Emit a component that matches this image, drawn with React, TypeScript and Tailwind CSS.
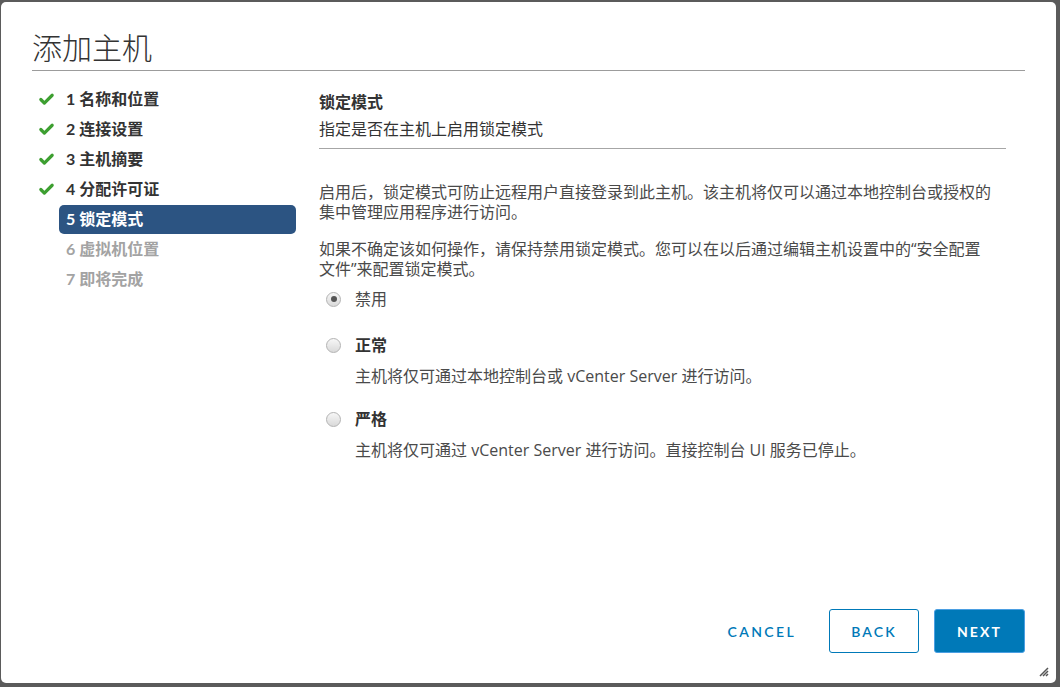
import { Check } from "lucide-react";

const font = "font-['Lato','Noto_Sans_CJK_SC',sans-serif]";
const bodyFont = "font-['Open_Sans','Noto_Sans_CJK_SC',sans-serif]";

interface Step {
  label: string;
  state: "done" | "active" | "todo";
}

const steps: Step[] = [
  { label: "1 名称和位置", state: "done" },
  { label: "2 连接设置", state: "done" },
  { label: "3 主机摘要", state: "done" },
  { label: "4 分配许可证", state: "done" },
  { label: "5 锁定模式", state: "active" },
  { label: "6 虚拟机位置", state: "todo" },
  { label: "7 即将完成", state: "todo" },
];

function Radio({ checked }: { checked?: boolean }) {
  return (
    <span className="w-[15px] h-[15px] rounded-full border border-[#b3b3b3] bg-gradient-to-b from-[#f7f7f7] to-[#d9d9d9] flex items-center justify-center shrink-0">
      {checked && <span className="w-[6px] h-[6px] rounded-full bg-[#555]" />}
    </span>
  );
}

export default function App() {
  return (
    <div className={`w-[1060px] h-[687px] bg-[#5b5b5b] pt-[2px] pl-[1px] ${font}`}>
      <div className="relative w-[1055px] h-[681px] bg-white rounded-[5px] flex flex-col px-[31px]">
        {/* header */}
        <div className="pt-[27px] border-b border-[#9c9c9c] pb-[5px]">
          <h1 className="text-[30px] leading-[36px] font-light text-[#333]">添加主机</h1>
        </div>

        {/* body */}
        <div className="flex-1 flex">
          {/* steps */}
          <nav className="w-[264px] pt-[13px] shrink-0">
            {steps.map((s) => (
              <div key={s.label} className="flex h-[30px] items-center">
                <div className="w-[27px] flex justify-center pl-[2px]">
                  {s.state === "done" && <Check className="w-[17px] h-[17px] text-[#3d9f30]" strokeWidth={4.5} />}
                </div>
                <div
                  className={
                    s.state === "active"
                      ? "flex-1 h-[29px] flex items-center px-[7px] rounded-[5px] bg-[#2c5482] text-white font-bold text-[16px]"
                      : s.state === "done"
                      ? "flex-1 h-[29px] flex items-center px-[7px] text-[#333] font-bold text-[16px]"
                      : "flex-1 h-[29px] flex items-center px-[7px] text-[#a3a3a3] font-bold text-[16px]"
                  }
                >
                  {s.label}
                </div>
              </div>
            ))}
          </nav>

          {/* content */}
          <div className={`ml-[23px] w-[687px] pt-[21px] text-[16px] leading-[20px] text-[#4a4a4a] ${bodyFont}`}>
            <div className="font-bold text-[#333]">锁定模式</div>
            <div className="mt-[7px] text-[#333]">指定是否在主机上启用锁定模式</div>
            <div className="mt-[9px] border-t border-[#a6a6a6]" />

            <p className="mt-[33px]">
              启用后，锁定模式可防止远程用户直接登录到此主机。该主机将仅可以通过本地控制台或授权的集中管理应用程序进行访问。
            </p>
            <p className="mt-[17px]">
              如果不确定该如何操作，请保持禁用锁定模式。您可以在以后通过编辑主机设置中的“安全配置
              <br />
              文件”来配置锁定模式。
            </p>

            <div className="mt-[10px] flex items-center gap-[14px] pl-[7px]">
              <Radio checked />
              <span>禁用</span>
            </div>

            <div className="mt-[26px] flex items-center gap-[14px] pl-[7px]">
              <Radio />
              <span className="font-bold text-[#333]">正常</span>
            </div>
            <div className="mt-[11px] pl-[36px]">主机将仅可通过本地控制台或 vCenter Server 进行访问。</div>

            <div className="mt-[23px] flex items-center gap-[14px] pl-[7px]">
              <Radio />
              <span className="font-bold text-[#333]">严格</span>
            </div>
            <div className="mt-[11px] pl-[36px]">主机将仅可通过 vCenter Server 进行访问。直接控制台 UI 服务已停止。</div>
          </div>
        </div>

        {/* footer */}
        <div className="flex justify-end items-center pb-[30px]">
          <button className="h-[44px] px-[12px] mr-[21px] text-[#0079b8] text-[14px] font-semibold tracking-[0.17em]">CANCEL</button>
          <button className="h-[44px] w-[90px] mr-[15px] rounded-[3px] border border-[#0079b8] text-[#0079b8] text-[14px] font-semibold tracking-[0.15em]">
            BACK
          </button>
          <button className="h-[44px] w-[91px] rounded-[3px] border border-[#4b9fe2] bg-[#0079b8] text-white text-[14px] font-bold tracking-[0.15em]">
            NEXT
          </button>
        </div>

        {/* resize grip */}
        <svg className="absolute right-[7px] bottom-[6px]" width="12" height="12" viewBox="0 0 12 12">
          <path d="M11 3 L3 11 M11 6 L6 11 M11 9 L9 11" stroke="#555" strokeWidth="1.5" />
        </svg>
      </div>
    </div>
  );
}
